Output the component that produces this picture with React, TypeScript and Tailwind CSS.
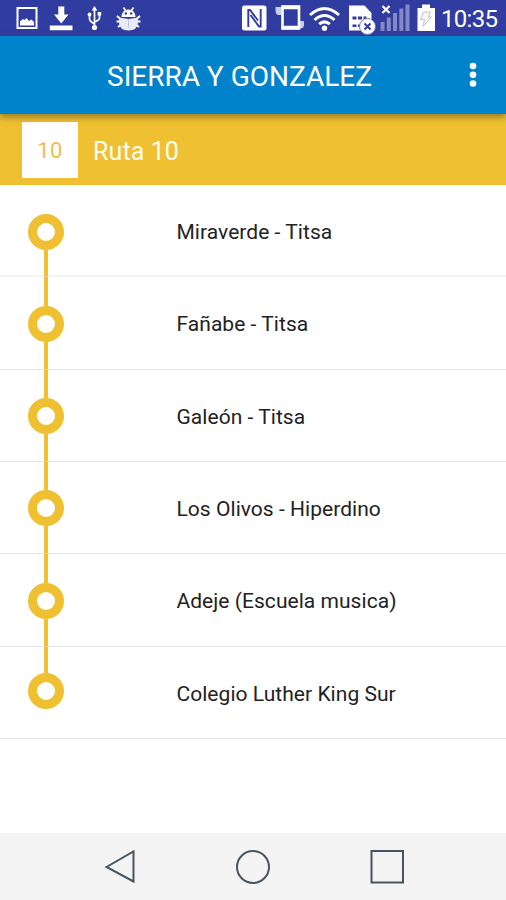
import React from 'react';

const stops = [
  'Miraverde - Titsa',
  'Fañabe - Titsa',
  'Galeón - Titsa',
  'Los Olivos - Hiperdino',
  'Adeje (Escuela musica)',
  'Colegio Luther King Sur',
];

function StatusBar() {
  return (
    <div className="flex h-9 shrink-0 items-start bg-[#303c9f] text-white">
      {/* picture */}
      <svg className="ml-4 h-9 w-[22px] shrink-0" viewBox="16 0 22 36" fill="none">
        <rect x="17.500" y="8" width="19" height="20" stroke="#fff" strokeWidth="2" />
        <path d="M20 25.500v-4l3-2.500 1.500 1 2-2 2.500 3 2.500-1.500 2.500 2.500v3.500z" fill="#fff" />
      </svg>
      {/* download */}
      <svg className="ml-[11px] h-9 w-[25px] shrink-0" viewBox="49 0 25 36" fill="#fff">
        <path d="M58.300 6.500h6v8h4.200L61.300 23.500 54 14.500h4.300zM49.800 25.500h22.700v4.800H49.800z" />
      </svg>
      {/* usb */}
      <svg className="ml-[12px] h-9 w-[17px] shrink-0" viewBox="86 0 17 36" fill="none" stroke="#fff" strokeWidth="1.700">
        <path d="M94.500 9v18M89.500 15v4q0 2 5 5M99.500 14v4q0 2-5 4" />
        <path d="M91.700 10.500L94.500 6l2.800 4.500z" fill="#fff" stroke="none" />
        <circle cx="89.500" cy="14.500" r="1.900" fill="#fff" stroke="none" />
        <path d="M97.700 12h3.500v3.500h-3.500z" fill="#fff" stroke="none" />
        <circle cx="94.500" cy="27.500" r="2.600" fill="#fff" stroke="none" />
      </svg>
      {/* debug bug */}
      <svg className="ml-[13px] h-9 w-[26px] shrink-0" viewBox="116 0 26 36" fill="none" stroke="#fff">
        <path d="M123.500 7.500l2 3M133.500 7.500l-2 3" strokeWidth="1.600" />
        <path d="M121.500 17q.5-7.500 7-7.500t7 7.500z" fill="#fff" stroke="none" />
        <path d="M120 18.500l-3-2.500M137 18.500l3-2.500M120 21.500h-3.500M137 21.500h3.500M120.500 25l-2.500 2M136.500 25l2.500 2" strokeWidth="2" />
        <path d="M119 17.500l9.500 1.500 9.500-1.500v5q-.5 8-9.500 8t-9.500-8z" fill="#e9eaf5" stroke="none" />
        <path d="M128.500 19v9" stroke="#c3c6e2" />
        <circle cx="125.800" cy="13.500" r="1.200" fill="#303c9f" stroke="none" />
        <circle cx="131.200" cy="13.500" r="1.200" fill="#303c9f" stroke="none" />
      </svg>
      {/* nfc */}
      <svg className="ml-[100px] h-9 w-[25px] shrink-0" viewBox="242 0 25 36" fill="none">
        <path d="M244.500 5.500h19.500q2.500 0 2.500 2.500v20q0 2.500-2.500 2.500h-19.500q-2.500 0-2.500-2.500V8q0-2.500 2.500-2.500z" fill="#fff" />
        <path d="M248.300 27V10h1.700l8 10.500M260.700 9v17.500h-1.700l-8.500-11.500" stroke="#303c9f" strokeWidth="1.900" />
      </svg>
      {/* vibrate */}
      <svg className="ml-[8px] h-9 w-[30px] shrink-0" viewBox="275 0 30 36" fill="none">
        <path d="M275.500 7h6v8h-3.500q-2.500-1-2.500-4zM299 21h5v5q-1 3-5 2.500z" fill="#c9ccea" />
        <rect x="282.500" y="6.500" width="16.500" height="22" fill="#303c9f" stroke="#fff" strokeWidth="2.600" />
        <path d="M281.500 7.500h18M281.500 27.500h18" stroke="#fff" strokeWidth="3.500" />
      </svg>
      {/* wifi */}
      <svg className="ml-[4px] h-9 w-[31px] shrink-0" viewBox="309 0 31 36" fill="none" stroke="#fff" strokeWidth="3">
        <path d="M310 15Q324.500 2 339 15M314.500 20Q324.500 11 334.500 20M319.200 24.200Q324.500 19.500 329.800 24.200" />
        <circle cx="324.500" cy="28.300" r="2.700" fill="#fff" stroke="none" />
      </svg>
      {/* sim card */}
      <svg className="ml-[8px] h-9 w-[28px] shrink-0" viewBox="348 0 28 36">
        <path d="M349 5.500h15.500L371.500 13v17.500h-22.500z" fill="#fff" />
        <path d="M352.500 16.500h4v3h-4zM358 16.500h4v3h-4zM363.500 16.500h3v3h-3zM352.500 24.500h4v2.500h-4zM358 24.500h2v2.500h-2z" fill="#303c9f" />
        <circle cx="367.500" cy="26.500" r="8" fill="#fff" stroke="#7179bd" strokeWidth="1" />
        <path d="M364.500 23.500l6 6M370.500 23.500l-6 6" stroke="#303c9f" strokeWidth="2" />
      </svg>
      {/* signal */}
      <svg className="ml-[4px] h-9 w-[31px] shrink-0" viewBox="380 0 31 36" fill="#8389c7">
        <path d="M380.500 22h4v9h-4zM386.800 17.500h4V31h-4zM393 13h4v18h-4zM399.300 8.500h4V31h-4zM405.500 4.500h4V31h-4z" />
        <path d="M382.500 6l7 7M389.500 6l-7 7" stroke="#fff" strokeWidth="2.200" />
      </svg>
      {/* battery */}
      <svg className="ml-[6px] h-9 w-[19px] shrink-0" viewBox="417 0 19 36">
        <path d="M422 4.500h8V8h5v23h-17.500V8h4.500z" fill="#fff" />
        <path d="M423.500 12h7l-2 5h3L423 26.500l1.500-7h-4z" fill="#f4f4f4" stroke="#c4c4cc" strokeWidth="1" />
      </svg>
      <span className="ml-[5px] mt-[1px] whitespace-nowrap text-[24px] leading-9 tracking-[-0.7px]">10:35</span>
    </div>
  );
}

function AppBar() {
  return (
    <header className="relative z-10 flex h-[78px] shrink-0 items-center bg-[#0083cb] pl-[107px] pr-[29px] text-white shadow-[0_3px_7px_rgba(70,60,20,0.55)]">
      <h1 className="flex-1 whitespace-nowrap pt-[4px] text-[28px] leading-9">SIERRA Y GONZALEZ</h1>
      <svg className="h-7 w-2" viewBox="0 0 8 28" fill="#fff">
        <circle cx="4" cy="5" r="3.300" />
        <circle cx="4" cy="13.800" r="3.300" />
        <circle cx="4" cy="22.500" r="3.300" />
      </svg>
    </header>
  );
}

function RouteHeader() {
  return (
    <div className="flex h-[70.500px] shrink-0 items-center bg-[#efc031] pl-[22px] pt-[1px]">
      <div className="flex size-14 items-center justify-center bg-white pt-[2px] text-[22px] tracking-[0.3px] text-[#efbd4e]">10</div>
      <div className="ml-[15px] whitespace-nowrap pt-[4px] text-[25px] leading-8 tracking-[0.1px] text-[#fffdf0]">Ruta 10</div>
    </div>
  );
}

function StopRow({ name, first, last }: { name: string; first: boolean; last: boolean }) {
  return (
    <li className={first ? 'flex h-[92.300px] border-b-2 border-[#f3f3f5]' : 'flex h-[92.300px] border-b border-[#e4e4e5]'}>
      <div className={(first ? '-mb-[2px]' : '-mb-px') + ' ml-7 flex w-9 shrink-0 flex-col items-center'}>
        <span className={(last ? 'h-[26px]' : 'h-[28.500px]') + (first ? ' w-[3.500px]' : ' w-[3.500px] bg-[#efc031]')} />
        <span className="size-9 shrink-0 rounded-full border-[9px] border-[#efc031]" />
        {!last && <span className="w-[3.500px] flex-1 border-b border-[#eed184] bg-[#efc031]" />}
      </div>
      <span className="ml-[112.500px] whitespace-nowrap pt-[29px] text-[21px] leading-9 tracking-[0.04px] text-[#222]">{name}</span>
    </li>
  );
}

function NavigationBar() {
  return (
    <nav className="mt-auto flex h-[67px] shrink-0 items-center bg-[#f4f4f4] pl-[103px]">
      <svg className="h-9 w-9" viewBox="0 0 36 36" fill="none" stroke="#46555f" strokeWidth="2">
        <path d="M3.500 18L30.500 2.500v30z" />
      </svg>
      <svg className="ml-[96px] h-9 w-9" viewBox="0 0 36 36" fill="none" stroke="#46555f" strokeWidth="2">
        <circle cx="18" cy="18" r="16" />
      </svg>
      <svg className="ml-[98px] h-9 w-9" viewBox="0 0 36 36" fill="none" stroke="#46555f" strokeWidth="2">
        <rect x="2.500" y="2" width="31.500" height="31.500" />
      </svg>
    </nav>
  );
}

export default function App() {
  return (
    <div className="flex h-[900px] w-[506px] flex-col overflow-hidden bg-white font-['Roboto',sans-serif]">
      <StatusBar />
      <AppBar />
      <RouteHeader />
      <ul className="pt-[0.600px]">
        {stops.map((name, i) => (
          <StopRow key={name} name={name} first={i === 0} last={i === stops.length - 1} />
        ))}
      </ul>
      <NavigationBar />
    </div>
  );
}
